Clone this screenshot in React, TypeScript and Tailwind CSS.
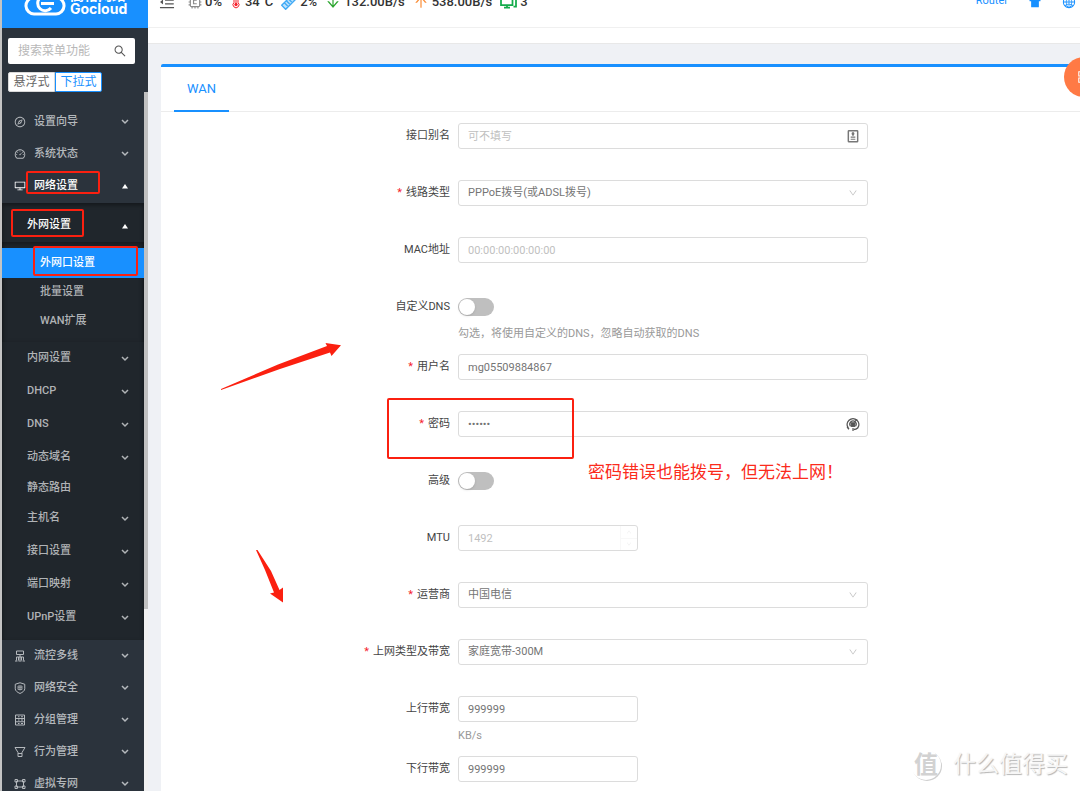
import { useState, type ReactNode } from 'react';
import {
  AiFillSkin,
  AiOutlineAppstore,
  AiOutlineArrowDown,
  AiOutlineArrowUp,
  AiOutlineCompass,
  AiOutlineDashboard,
  AiOutlineDesktop,
  AiOutlineDown,
  AiOutlineGlobal,
  AiOutlineMenuFold,
  AiOutlineSearch,
} from 'react-icons/ai';

function Glyph({ children, className = 'size-3' }: { children: ReactNode; className?: string }) {
  return (
    <svg viewBox="0 0 24 24" fill="none" stroke="currentColor" strokeWidth="2" className={className} aria-hidden="true">
      {children}
    </svg>
  );
}

const FlowIcon = () => (
  <Glyph>
    <path d="M5 2h14v7H5zM12 9v12M5 21v-7h14v7M9 14v7M15 14v7M2 22h5M9 22h6M17 22h5" />
  </Glyph>
);

const ShieldIcon = () => (
  <Glyph>
    <path d="M12 1.500l9.500 3v9c0 4-4 7-9.500 9.500C6.500 20.500 2.500 17.500 2.500 13.500v-9z" />
    <path d="M8 8h8v7H8zM12 7v10M8 11.500h8" strokeWidth="1.500" />
  </Glyph>
);

const GroupIcon = () => (
  <Glyph>
    <path d="M3 2h18v20H3zM3 9h18M3 15.500h18M8 5.500h3M8 12h3M8 19h3M14 5.500h4M14 12h4M14 19h4" />
  </Glyph>
);

const FilterIcon = () => (
  <Glyph>
    <path d="M2 3h20l-6 10v8H8v-8zM8 15h8" />
  </Glyph>
);

const VpnIcon = () => (
  <Glyph>
    <path d="M5 6h14M5 18h14M5 6v12M19 6v12" />
    <path d="M2 3h5v5H2zM17 3h5v5h-5zM2 16h5v5H2zM17 16h5v5h-5z" />
  </Glyph>
);

const CpuIcon = () => (
  <Glyph className="size-3.5 text-[#8c8c8c]">
    <rect x="4" y="4" width="16" height="16" rx="2" />
    <path d="M15 9H9.500v6H15" />
    <path d="M7 1v3M12 1v3M17 1v3M7 20v3M12 20v3M17 20v3M1 7h3M1 12h3M1 17h3M20 7h3M20 12h3M20 17h3" />
  </Glyph>
);

const ThermometerIcon = () => (
  <Glyph className="h-3.5 w-3 text-[#f5222d]">
    <path d="M8 13V4a4 4 0 0 1 8 0v9a6 6 0 1 1-8 0z" />
    <circle cx="12" cy="17" r="2.500" fill="currentColor" />
    <path d="M12 8v9" />
  </Glyph>
);

const MemoryIcon = () => (
  <Glyph className="size-4 text-[#3fa9f5]">
    <path d="M1 17L17 1l6 6L7 23z" fill="#bfe3fc" />
    <path d="M5 13l5 5M8 10l5 5M11 7l5 5M14 4l5 5" />
  </Glyph>
);

const ScreensIcon = () => (
  <svg viewBox="0 0 34 28" fill="none" stroke="#13ab4a" strokeWidth="3.500" className="h-3.5 w-[17px]" aria-hidden="true">
    <path d="M2 4h23v16H2zM8 25h12M14 20v5" />
    <path d="M28 5h4v18h-5" />
  </svg>
);

const CloudLogo = () => (
  <svg viewBox="0 0 42 32" fill="none" stroke="#fff" className="h-8 w-[42px]" aria-hidden="true">
    <path d="M10 30a8.300 8.300 0 0 1-1-16.500A12.500 12.500 0 0 1 33 13.500a8.300 8.300 0 0 1-1 16.500z" strokeWidth="3" />
    <path d="M27 14.500a7.500 7.500 0 1 0 0 9.500" strokeWidth="3" />
    <path d="M17 19.500h13" strokeWidth="3" />
  </svg>
);

const Chevron = ({ open }: { open?: boolean }) => (
  <svg viewBox="0 0 8 6" className="h-1.5 w-2" fill="none" stroke="currentColor" strokeWidth="1.500" aria-hidden="true">
    {open ? <path d="M1 5.500h6L4 1z" fill="currentColor" stroke="none" /> : <path d="M1 1l3 3 3-3" />}
  </svg>
);

type MenuItem = { label: string; icon?: ReactNode; open?: boolean; leaf?: boolean };

const TOP_MENU: MenuItem[] = [
  { label: '设置向导', icon: <AiOutlineCompass /> },
  { label: '系统状态', icon: <AiOutlineDashboard /> },
  { label: '网络设置', icon: <AiOutlineDesktop />, open: true },
];

const WAN_MENU = ['外网口设置', '批量设置', 'WAN扩展'];

const NETWORK_MENU: MenuItem[] = [
  { label: '内网设置' },
  { label: 'DHCP' },
  { label: 'DNS' },
  { label: '动态域名' },
  { label: '静态路由', leaf: true },
  { label: '主机名' },
  { label: '接口设置' },
  { label: '端口映射' },
  { label: 'UPnP设置' },
];

const BOTTOM_MENU: MenuItem[] = [
  { label: '流控多线', icon: <FlowIcon /> },
  { label: '网络安全', icon: <ShieldIcon /> },
  { label: '分组管理', icon: <GroupIcon /> },
  { label: '行为管理', icon: <FilterIcon /> },
  { label: '虚拟专网', icon: <VpnIcon /> },
];

function TopItem({ item }: { item: MenuItem }) {
  return (
    <button
      aria-expanded={!!item.open}
      className={`flex h-8 w-full items-center gap-2 pr-[15px] pl-3 ${item.open ? 'text-white' : 'text-[#b5b9bd]'}`}
    >
      <span className="flex text-xs">{item.icon}</span>
      <span className="flex-1 text-left">{item.label}</span>
      <Chevron open={item.open} />
    </button>
  );
}

function SubItem({ item }: { item: MenuItem }) {
  if (item.leaf) {
    return (
      <a href="#" className="flex h-7 items-center pl-[25px] text-[#b0b3b6]">
        {item.label}
      </a>
    );
  }
  return (
    <button
      aria-expanded={!!item.open}
      className={`flex h-[33px] w-full items-center justify-between pr-[15px] pl-[25px] ${item.open ? 'text-white' : 'text-[#b0b3b6]'}`}
    >
      {item.label}
      <Chevron open={item.open} />
    </button>
  );
}

function Sidebar() {
  const [mode, setMode] = useState('下拉式');

  return (
    <aside className="flex w-[148px] shrink-0 flex-col border-l-2 border-[#c4c4c4] bg-[#2b333c]">
      <div className="-mt-6 flex h-[52px] shrink-0 items-end gap-1 bg-[#1890ff] pb-3 pl-[22px] text-white">
        <CloudLogo />
        <div className="text-sm leading-3.5 font-bold">
          <div>高格网络</div>
          <div className="font-[Inter]">Gocloud</div>
        </div>
      </div>

      <div className="px-1.5 pt-2.5">
        <div className="flex h-[26px] w-[127px] items-center rounded-xs bg-white pr-2 pl-2.5">
          <input
            aria-label="搜索菜单功能"
            placeholder="搜索菜单功能"
            className="w-full min-w-0 text-xs text-[#666] outline-none placeholder:text-[#b8b8b8]"
          />
          <AiOutlineSearch className="size-3.5 shrink-0 text-[#555]" />
        </div>
        <div className="mt-2 flex h-5 w-[94px]">
          {['悬浮式', '下拉式'].map((m) => (
            <label
              key={m}
              className={`relative flex flex-1 items-center justify-center border bg-white text-xs ${
                mode === m ? 'rounded-r-xs border-[#1890ff] text-[#1890ff]' : 'rounded-l-xs border-[#d9d9d9] text-[#666]'
              }`}
            >
              <input type="radio" name="menu-mode" checked={mode === m} onChange={() => setMode(m)} className="sr-only" />
              {m}
            </label>
          ))}
        </div>
      </div>

      <div className="flex min-h-0 flex-1">
        <nav className="min-w-0 flex-1 overflow-hidden pt-3.5 text-[11px] font-medium">
          {TOP_MENU.map((item) => (
            <TopItem key={item.label} item={item} />
          ))}
          <div className="mt-px bg-[#20262c] pt-1.5 pb-1.5 shadow-[inset_0_2px_4px_rgba(0,0,0,0.4)]">
            <SubItem item={{ label: '外网设置', open: true }} />
            <div className="py-1.5 shadow-[inset_0_2px_5px_rgba(0,0,0,0.35)]">
              {WAN_MENU.map((label, i) => (
                <a
                  key={label}
                  href="#"
                  className={`flex items-center pl-[38px] ${i === 0 ? 'h-[30px] bg-[#1890ff] text-white' : 'h-[29px] text-[#b0b3b6]'}`}
                >
                  {label}
                </a>
              ))}
            </div>
            {NETWORK_MENU.map((item) => (
              <SubItem key={item.label} item={item} />
            ))}
          </div>
          {BOTTOM_MENU.map((item) => (
            <TopItem key={item.label} item={item} />
          ))}
        </nav>
        <div className="w-1 bg-[#f1f1f1]">
          <div className="h-[74%] bg-[#c1c1c1]" />
        </div>
      </div>
    </aside>
  );
}

function Stat({ icon, children }: { icon: ReactNode; children: ReactNode }) {
  return (
    <span className="flex items-center gap-[3px]">
      {icon}
      {children}
    </span>
  );
}

function Header() {
  return (
    <header className="-mt-6 flex h-[52px] shrink-0 items-center justify-between border-b border-[#f0f0f0] bg-white pl-2.5 text-[13px] font-medium text-[#333]">
      <div className="flex items-center gap-2">
        <button aria-label="收起菜单" className="mr-1 text-lg text-[#555]">
          <AiOutlineMenuFold />
        </button>
        <Stat icon={<CpuIcon />}>0%</Stat>
        <Stat icon={<ThermometerIcon />}>34°C</Stat>
        <Stat icon={<MemoryIcon />}>2%</Stat>
        <Stat icon={<AiOutlineArrowDown className="size-4 text-[#2ba52e]" />}>132.00B/s</Stat>
        <Stat icon={<AiOutlineArrowUp className="size-4 text-[#fa8c35]" />}>538.00B/s</Stat>
        <Stat icon={<ScreensIcon />}>3</Stat>
      </div>
      <div className="flex items-center gap-5 pr-1 text-[#1890ff]">
        <a href="#" className="text-[11px] font-normal">
          Router
        </a>
        <button aria-label="主题">
          <AiFillSkin className="size-3.5" />
        </button>
        <button aria-label="语言">
          <AiOutlineGlobal className="size-3.5" />
        </button>
      </div>
    </header>
  );
}

type RowProps = { id: string; label: string; required?: boolean; help?: string; children: ReactNode };

function Row({ id, label, required, help, children }: RowProps) {
  return (
    <div className={`flex gap-2 ${help ? 'h-[60px]' : 'h-[57px]'}`}>
      <label htmlFor={id} className="flex h-[26px] w-[289px] shrink-0 items-center justify-end text-[#444]">
        {required && <span className="mr-1 text-[#f5222d]">*</span>}
        {label}
      </label>
      <div className="max-w-[410px] flex-1">
        <div className="flex h-[26px] items-center">{children}</div>
        {help && <p className="pt-1 leading-5 text-[#999]">{help}</p>}
      </div>
    </div>
  );
}

const FIELD =
  'h-[26px] w-full rounded-[3px] border border-[#dcdcdc] bg-white px-[9px] text-[11px] text-[#757575] outline-none placeholder:text-[#bfbfbf]';

function Select({ id, value }: { id: string; value: string }) {
  return (
    <div className="relative w-full">
      <select id={id} className={`${FIELD} appearance-none`}>
        <option>{value}</option>
      </select>
      <AiOutlineDown className="pointer-events-none absolute top-2 right-2.5 size-2.5 text-[#bfbfbf]" />
    </div>
  );
}

function Switch({ id }: { id: string }) {
  const [on, setOn] = useState(false);
  return (
    <button
      id={id}
      type="button"
      role="switch"
      aria-checked={on}
      onClick={() => setOn(!on)}
      className={`flex h-[18px] w-9 items-center rounded-full px-px ${on ? 'justify-end bg-[#1890ff]' : 'bg-[#bfbfbf]'}`}
    >
      <span className="size-4 rounded-full bg-white shadow-sm" />
    </button>
  );
}

function WanForm() {
  return (
    <form className="pt-[11px] text-[11px]" onSubmit={(e) => e.preventDefault()}>
      <Row id="alias" label="接口别名">
        <div className="relative w-full">
          <input id="alias" placeholder="可不填写" className={FIELD} />
          <Glyph className="absolute top-1.5 right-2 size-3.5 text-[#777]">
            <rect x="4" y="3" width="16" height="19" rx="1" strokeWidth="2.500" />
            <path d="M8 17.500h8M8 14h8M12 6v6" />
            <circle cx="12" cy="8" r="1.500" fill="currentColor" />
          </Glyph>
        </div>
      </Row>
      <Row id="line" label="线路类型" required>
        <Select id="line" value="PPPoE拨号(或ADSL拨号)" />
      </Row>
      <Row id="mac" label="MAC地址">
        <input id="mac" placeholder="00:00:00:00:00:00" className={FIELD} />
      </Row>
      <Row id="dns" label="自定义DNS" help="勾选，将使用自定义的DNS，忽略自动获取的DNS">
        <Switch id="dns" />
      </Row>
      <Row id="user" label="用户名" required>
        <input id="user" defaultValue="mg05509884867" className={FIELD} />
      </Row>
      <Row id="password" label="密码" required>
        <div className="relative w-full">
          <input id="password" type="password" defaultValue="123456" className={FIELD} />
          <Glyph className="absolute top-1.5 right-2 size-3.5 text-[#555]">
            <path d="M4 19A10 10 0 1 1 20 19M2 17l3 4M20 19c-2 2-4 2.500-7 2.500" strokeWidth="2.500" />
            <path d="M7.500 15.500a5.500 5.500 0 1 1 9 0M12 19v5" />
            <rect x="9" y="10" width="6" height="6" fill="currentColor" />
            <path d="M15 8l4-4" />
          </Glyph>
        </div>
      </Row>
      <Row id="advanced" label="高级">
        <Switch id="advanced" />
      </Row>
      <Row id="mtu" label="MTU">
        <div className="relative w-[180px]">
          <input id="mtu" placeholder="1492" className={`${FIELD} border-[#d5dfe8]`} />
          <div className="absolute top-px right-px flex h-6 w-[17px] flex-col divide-y divide-[#f8f8f8] border-l border-[#f8f8f8] text-[#eee]">
            <button type="button" aria-label="增加" className="flex flex-1 items-center justify-center">
              <AiOutlineDown className="size-1.5 rotate-180" />
            </button>
            <button type="button" aria-label="减少" className="flex flex-1 items-center justify-center">
              <AiOutlineDown className="size-1.5" />
            </button>
          </div>
        </div>
      </Row>
      <Row id="isp" label="运营商" required>
        <Select id="isp" value="中国电信" />
      </Row>
      <Row id="bandwidth" label="上网类型及带宽" required>
        <Select id="bandwidth" value="家庭宽带-300M" />
      </Row>
      <Row id="up" label="上行带宽" help="KB/s">
        <div className="w-[180px]">
          <input id="up" defaultValue="999999" className={FIELD} />
        </div>
      </Row>
      <Row id="down" label="下行带宽">
        <div className="w-[180px]">
          <input id="down" defaultValue="999999" className={FIELD} />
        </div>
      </Row>
    </form>
  );
}

// red marks drawn over the page, placed in window coordinates
function Annotations() {
  return (
    <div className="pointer-events-none absolute inset-0 overflow-hidden">
      <div className="absolute top-[171px] left-[26px] h-[23px] w-[74px] rounded-xs border-2 border-[#fb2010]" />
      <div className="absolute top-[209px] left-[11px] h-7 w-[73px] rounded-xs border-2 border-[#fb2010]" />
      <div className="absolute top-[246px] left-[33px] h-[30px] w-[105px] rounded-xs border-2 border-[#fb2010]" />
      <div className="absolute top-[398px] left-[387px] h-[61px] w-[187px] rounded-xs border-2 border-[#fb2010]" />
      <svg viewBox="0 0 122 50" className="absolute top-[342px] left-[220px] h-[50px] w-[122px]" fill="#fb2010" aria-hidden="true">
        <path d="M1 47L58 22.500 107 4l-1.500-3L121 3.300 111.500 14l-1.500-3.500L60 27 1 48z" />
      </svg>
      <svg viewBox="0 0 30 56" className="absolute top-[548px] left-[255px] h-14 w-[30px]" fill="#fb2010" aria-hidden="true">
        <path d="M1 2h1.500L16 23l8.500 19 3.500-2.500v15L15 45.500l4-1L10 22z" />
      </svg>
      <p className="absolute top-[460px] left-[588px] text-[17px] leading-6 text-[#fb2b1c]">密码错误也能拨号，但无法上网！</p>
      <div className="absolute right-3 bottom-2 flex items-center gap-3">
        <span className="flex size-[30px] items-center justify-center rounded-full text-2xl leading-none font-bold text-[#d2d2d2] shadow-[1px_1px_0_#cfcfcf]">
          值
        </span>
        <span className="text-[23px] leading-9 text-[#f6f6f6] [text-shadow:1px_1px_1px_#b5b5b5]">什么值得买</span>
      </div>
    </div>
  );
}

export default function App() {
  return (
    <div className="relative flex h-screen overflow-hidden bg-[#eff1f5] font-[Roboto,'Noto_Sans_CJK_SC',sans-serif]">
      <Sidebar />
      <main className="flex min-w-0 flex-1 flex-col">
        <Header />
        <div className="h-4 shrink-0 border-b border-[#e8e8e8] bg-white" />
        <section className="mt-5 ml-[13px] flex-1 rounded-t-xs border-t-3 border-[#1890ff] bg-white">
          <div role="tablist" className="flex h-[45px] border-b border-[#ececec] pl-[13px]">
            <button role="tab" aria-selected="true" className="h-[45px] border-b-2 border-[#1890ff] px-[13px] text-[13px] text-[#1890ff]">
              WAN
            </button>
          </div>
          <WanForm />
        </section>
      </main>
      <button
        aria-label="应用"
        className="absolute top-[57px] -right-6 flex size-10 items-center justify-center rounded-full bg-[#ff7a45] text-white"
      >
        <AiOutlineAppstore className="size-4" />
      </button>
      <Annotations />
    </div>
  );
}
